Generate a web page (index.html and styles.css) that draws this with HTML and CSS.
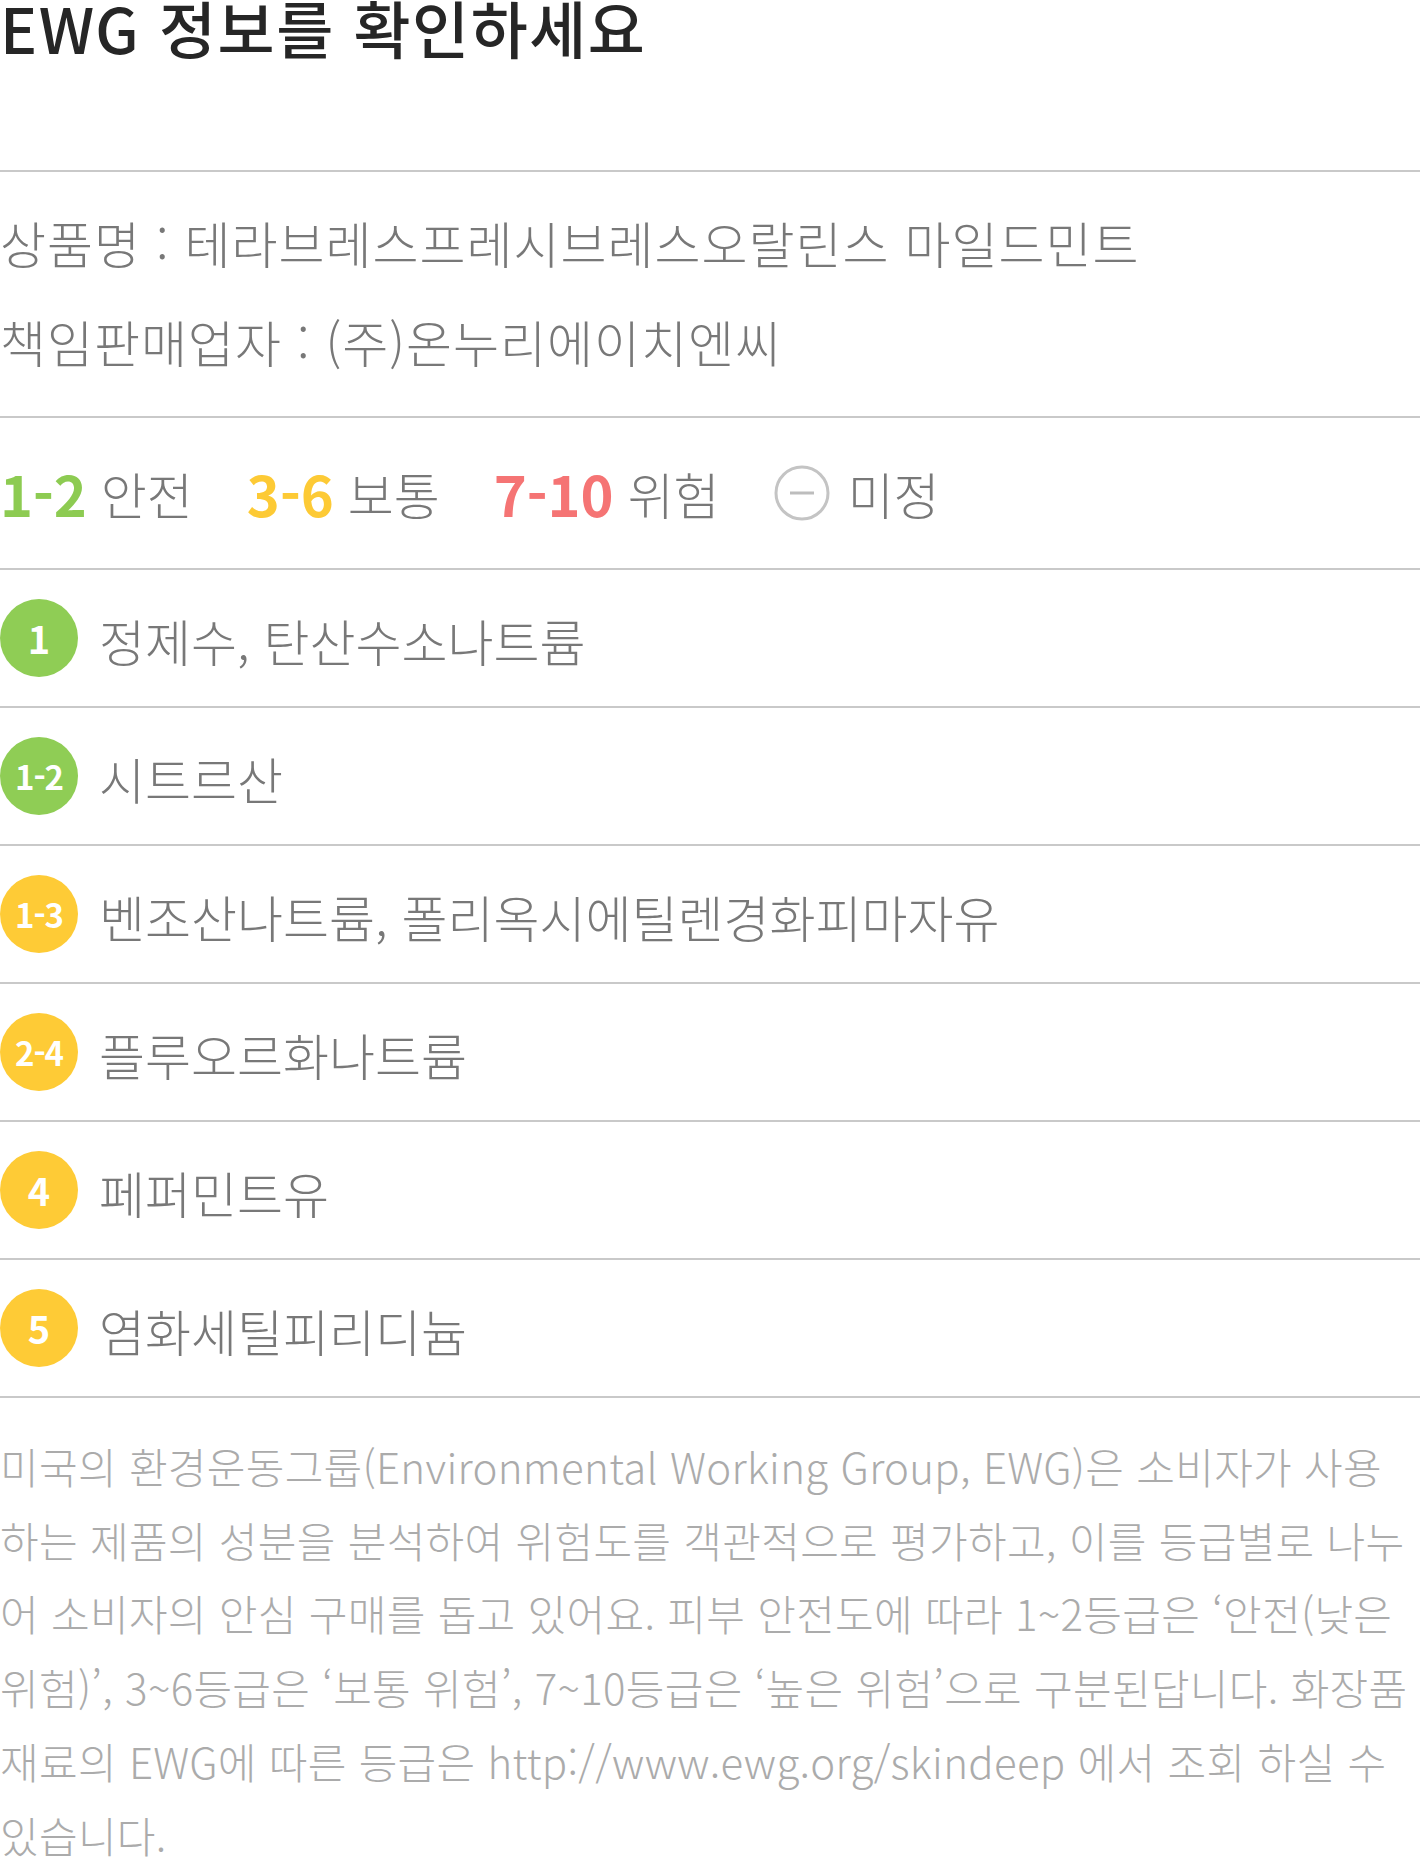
FILE: index.html
```html
<!DOCTYPE html>
<html lang="ko">
<head>
<meta charset="utf-8">
<title>EWG 정보를 확인하세요</title>
<link rel="stylesheet" href="styles.css">
</head>
<body>
<main class="ewg">
  <header class="title">
    <h1 class="title-text">EWG 정보를 확인하세요</h1>
  </header>

  <section class="info">
    <p class="info-line">상품명 : 테라브레스프레시브레스오랄린스 마일드민트</p>
    <p class="info-line">책임판매업자 : (주)온누리에이치엔씨</p>
  </section>

  <section class="legend">
    <div class="legend-item"><span class="legend-num num-green">1-2</span><span class="legend-label">안전</span></div>
    <div class="legend-item"><span class="legend-num num-yellow">3-6</span><span class="legend-label">보통</span></div>
    <div class="legend-item"><span class="legend-num num-red">7-10</span><span class="legend-label">위험</span></div>
    <div class="legend-item legend-none">
      <svg class="none-icon" width="56" height="56" viewBox="0 0 56 56" aria-hidden="true">
        <circle cx="28" cy="28" r="26" fill="none" stroke="#c4c4c4" stroke-width="3"/>
        <line x1="16" y1="28" x2="40" y2="28" stroke="#bdbdbd" stroke-width="3"/>
      </svg>
      <span class="legend-label">미정</span>
    </div>
  </section>

  <ul class="ingredients">
    <li class="row"><span class="badge badge-green">1</span><span class="row-name">정제수, 탄산수소나트륨</span></li>
    <li class="row"><span class="badge badge-green badge-range">1-2</span><span class="row-name">시트르산</span></li>
    <li class="row"><span class="badge badge-yellow badge-range">1-3</span><span class="row-name">벤조산나트륨, 폴리옥시에틸렌경화피마자유</span></li>
    <li class="row"><span class="badge badge-yellow badge-range">2-4</span><span class="row-name">플루오르화나트륨</span></li>
    <li class="row"><span class="badge badge-yellow">4</span><span class="row-name">페퍼민트유</span></li>
    <li class="row"><span class="badge badge-yellow">5</span><span class="row-name">염화세틸피리디늄</span></li>
  </ul>

  <p class="note">미국의 환경운동그룹(Environmental Working Group, EWG)은 소비자가 사용<br>하는 제품의 성분을 분석하여 위험도를 객관적으로 평가하고, 이를 등급별로 나누<br>어 소비자의 안심 구매를 돕고 있어요. 피부 안전도에 따라 1~2등급은 ‘안전(낮은<br>위험)’, 3~6등급은 ‘보통 위험’, 7~10등급은 ‘높은 위험’으로 구분된답니다. 화장품<br>재료의 EWG에 따른 등급은 http://www.ewg.org/skindeep 에서 조회 하실 수<br>있습니다.</p>
</main>
</body>
</html>
```

FILE: styles.css
```css
html, body {
  margin: 0;
  padding: 0;
  background: #ffffff;
}

body {
  font-family: "Noto Sans CJK KR", "Noto Sans", sans-serif;
  overflow: hidden;
}

.ewg {
  width: 1420px;
}

.title {
  height: 170px;
  border-bottom: 2px solid #c9c9c9;
}

.title-text {
  margin: 0;
  font-size: 62px;
  line-height: 54px;
  font-weight: 500;
  color: #262626;
  letter-spacing: 1.5px;
}

.info {
  padding: 21px 0 25px;
  border-bottom: 2px solid #c9c9c9;
}

.info-line {
  margin: 0;
  font-size: 50px;
  line-height: 99px;
  font-weight: 300;
  letter-spacing: 1px;
  color: #787878;
  white-space: nowrap;
}

.legend {
  display: flex;
  align-items: center;
  gap: 54px;
  height: 150px;
  border-bottom: 2px solid #c9c9c9;
}

.legend-item {
  display: flex;
  align-items: center;
  gap: 14px;
}

.legend-none {
  gap: 18px;
}

.legend-num {
  font-size: 56px;
  font-weight: 700;
  letter-spacing: 0;
  line-height: 1;
}

.num-green { color: #8dcb52; }
.num-yellow { color: #fdca35; }
.num-red { color: #f57474; }

.legend-label {
  font-size: 50px;
  font-weight: 300;
  letter-spacing: 0;
  color: #787878;
  line-height: 1;
}

.none-icon {
  display: block;
  flex: none;
}

.ingredients {
  list-style: none;
  margin: 0;
  padding: 0;
}

.row {
  display: flex;
  align-items: center;
  gap: 21px;
  height: 136px;
  border-bottom: 2px solid #c9c9c9;
}

.badge {
  flex: none;
  width: 78px;
  height: 78px;
  border-radius: 50%;
  display: flex;
  align-items: center;
  justify-content: center;
  color: #ffffff;
  font-size: 38px;
  font-weight: 700;
  line-height: 1;
}

.badge-range {
  font-size: 33px;
  letter-spacing: -1px;
}

.badge-green { background: #8fcd55; }
.badge-yellow { background: #fecb36; }

.row-name {
  font-size: 50px;
  font-weight: 300;
  letter-spacing: 0;
  color: #787878;
  line-height: 1;
  margin-top: 4px;
}

.note {
  margin: 0;
  padding-top: 31px;
  font-size: 42px;
  line-height: 73.7px;
  font-weight: 300;
  letter-spacing: 0.3px;
  color: #ababab;
  white-space: nowrap;
}
```
